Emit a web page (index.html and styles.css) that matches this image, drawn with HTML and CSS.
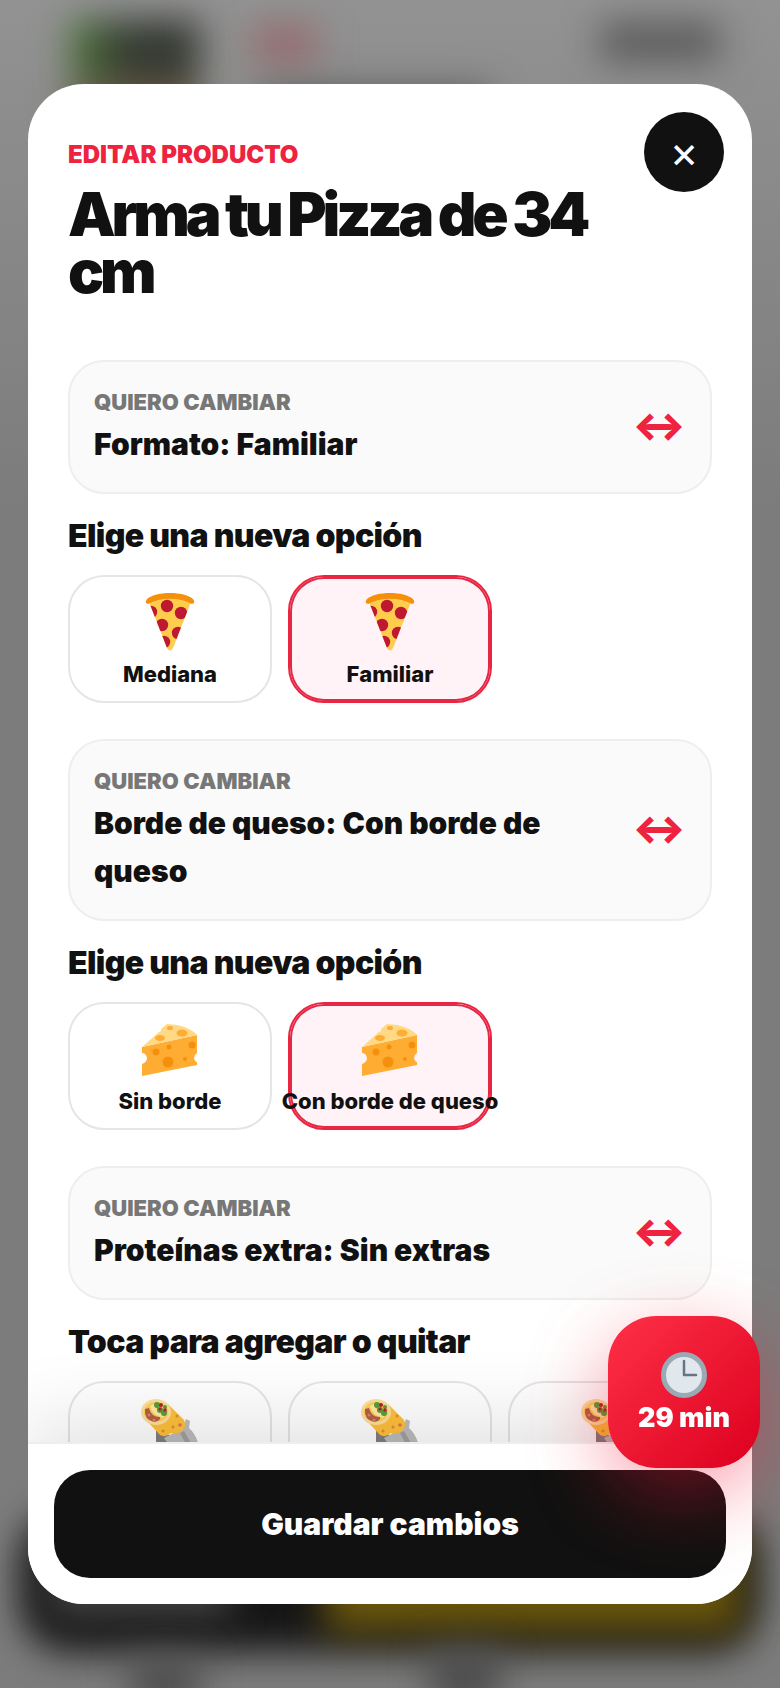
FILE: index.html
```html
<!DOCTYPE html>
<html lang="es"><head><meta charset="utf-8"><meta name="viewport" content="width=device-width, initial-scale=1"><title>Editar producto</title><link rel="stylesheet" href="styles.css"></head>
<body>
<svg class="sprite" aria-hidden="true">
<symbol id="pizza" viewBox="0 0 60 72">
<clipPath id="slice"><path d="M9 16 Q30 6 51 16 L33 62 Q30 67 27 62Z"/></clipPath>
<path fill="#ffcc4d" d="M9 16 Q30 6 51 16 L33 62 Q30 67 27 62Z"/>
<g fill="#be1931" clip-path="url(#slice)"><circle cx="27" cy="20" r="6.2"/><circle cx="41" cy="27" r="6.2"/><circle cx="11" cy="26" r="6.2"/><circle cx="22" cy="39" r="6.2"/><circle cx="38" cy="47" r="6.2"/><circle cx="24" cy="56" r="6.2"/></g>
<path fill="#f4900c" d="M7 13 C16 5 44 5 53 13 Q56 17 52 18 C40 11 20 11 8 18 Q4 17 7 13Z"/>
</symbol>
<symbol id="cheese" viewBox="0 0 68 64">
<path fill="#ffac33" d="M6 30 L61 18 V36 Q58 38 58 41 Q59 45 61 45 V48 L6 59 V47 Q11 45 11 41 Q10 36 6 36Z"/>
<path fill="#ffd983" d="M6 30 L23 15 Q26 14 25 12 L31 7 Q52 8 61 18Z"/>
<g fill="#ffac33"><ellipse cx="24" cy="21" rx="5" ry="3"/><ellipse cx="46" cy="16" rx="5.500" ry="3.500"/><ellipse cx="34" cy="11" rx="3" ry="2"/></g>
<g fill="#f4900c"><circle cx="20" cy="35" r="3.500"/><circle cx="33" cy="30" r="2.500"/><circle cx="32" cy="45" r="5.500"/><circle cx="56" cy="28" r="3.500"/><circle cx="49" cy="42" r="2"/></g>
</symbol>
<symbol id="burrito" viewBox="0 0 68 72">
<path fill="#808080" d="M20 38V64H44L36 44Z"/><path fill="#bdbdbd" d="M28 46 L47 36 L50 27 L54 29 L53 36 Q62 44 64 60 H38Z"/><path fill="#a0a0a0" d="M44 41 L48 39 L60 60 H54Z"/>
<path fill="#ffc13b" d="M10 28 L32 12 L48 28 Q51 34 46 39 Q41 43 35 41 Q30 46 24 43Z"/>
<g fill="#e88b2e"><circle cx="41" cy="24" r="1.500"/><circle cx="37" cy="35" r="1.500"/><circle cx="27" cy="39" r="1.500"/></g><circle cx="44" cy="33" r="1.800" fill="#d47c4c"/>
<ellipse cx="20" cy="20" rx="15" ry="13" fill="#ffdf9e"/><ellipse cx="20" cy="20" rx="12" ry="10" fill="#ffd04f"/>
<path fill="#b55f48" d="M9 17 Q8 28 18 30 Q25 29 24 25 Q15 25 13 16Z"/><path fill="#ffe9a8" d="M14 14 Q16 23 27 26 L29 23 Q20 20 18 12Z"/>
<g fill="#5c9e3c"><circle cx="21" cy="13" r="3"/><circle cx="24" cy="18" r="3"/><circle cx="28" cy="21" r="3"/><circle cx="29" cy="15" r="2"/></g><g fill="#b32132"><circle cx="25" cy="13" r="2"/><circle cx="29" cy="18" r="1.800"/><circle cx="24" cy="17" r="1.500"/></g>
<g fill="#d8866a"><circle cx="13" cy="23" r="1.500"/><circle cx="18" cy="28" r="1.500"/></g>
</symbol>
<symbol id="clock" viewBox="0 0 46 46"><circle cx="23" cy="23" r="20.500" fill="#e1e8ed" stroke="#99aab5" stroke-width="5"/><path d="M23 9V23H35" fill="none" stroke="#66757f" stroke-width="2.500" stroke-linecap="round" stroke-linejoin="round"/></symbol>
</svg>
<div class="backdrop" aria-hidden="true"><i class="photo"></i><i class="tag"></i><i class="price"></i><i class="name"></i><i class="bar"></i><i class="bar-left"></i><i class="bar-right"></i><i class="nav-left"></i><i class="nav-mid"></i></div>
<main class="screen">
<section class="modal" role="dialog" aria-labelledby="title">
<button class="close" type="button" aria-label="Cerrar">×</button>
<div class="content">
<header class="head"><p class="kicker">EDITAR PRODUCTO</p><h1 class="title" id="title">Arma tu Pizza de 34 cm</h1></header>
<section class="group">
<div class="current"><div><p class="hint">QUIERO CAMBIAR</p><p class="value">Formato: Familiar</p></div><span class="swap">↔</span></div>
<h2 class="subtitle">Elige una nueva opción</h2>
<div class="options"><button class="option" type="button"><svg class="icon"><use href="#pizza"/></svg><span>Mediana</span></button><button class="option selected" type="button"><svg class="icon"><use href="#pizza"/></svg><span>Familiar</span></button></div>
</section>
<section class="group">
<div class="current"><div><p class="hint">QUIERO CAMBIAR</p><p class="value">Borde de queso: Con borde de queso</p></div><span class="swap">↔</span></div>
<h2 class="subtitle">Elige una nueva opción</h2>
<div class="options"><button class="option" type="button"><svg class="icon"><use href="#cheese"/></svg><span>Sin borde</span></button><button class="option selected" type="button"><svg class="icon"><use href="#cheese"/></svg><span>Con borde de queso</span></button></div>
</section>
<section class="group">
<div class="current"><div><p class="hint">QUIERO CAMBIAR</p><p class="value">Proteínas extra: Sin extras</p></div><span class="swap">↔</span></div>
<h2 class="subtitle">Toca para agregar o quitar</h2>
<div class="options"><button class="option" type="button" aria-label="Extra 1"><svg class="icon"><use href="#burrito"/></svg></button><button class="option" type="button" aria-label="Extra 2"><svg class="icon"><use href="#burrito"/></svg></button><button class="option" type="button" aria-label="Extra 3"><svg class="icon"><use href="#burrito"/></svg></button></div>
</section>
</div>
<footer class="footer"><button class="save" type="button">Guardar cambios</button></footer>
</section>
</main>
<button class="timer" type="button"><svg class="clock"><use href="#clock"/></svg><span>29 min</span></button>
</body></html>
```
FILE: styles.css
```css
*{box-sizing:border-box}
body{margin:0;background:#8a8888;color:#111;font-family:Inter,"Liberation Sans",sans-serif;overflow:hidden}
p,h1,h2{margin:0}
button{font:inherit;color:inherit;border:0;padding:0;cursor:pointer}
.sprite{position:absolute;width:0;height:0}
.backdrop{position:fixed;inset:0;overflow:hidden;background:linear-gradient(#929292,#7c7c7c 30%,#7c7c7c)}
.backdrop i{position:absolute;filter:blur(18px)}
.photo{left:70px;top:20px;width:130px;height:110px;background:linear-gradient(#0000 40%,#6b5d48 75%),linear-gradient(90deg,#4e7a3a,#333831 45%)}
.tag{left:254px;top:26px;width:62px;height:36px;background:#96686c}
.price{left:600px;top:22px;width:120px;height:40px;background:#5c5c5c}
.name{left:260px;top:90px;width:230px;height:30px;background:#555}
.bar{left:20px;right:20px;bottom:36px;height:140px;border-radius:50px;background:#161616}
.bar-left{left:50px;bottom:72px;width:180px;height:70px;background:#444}
.bar-right{left:325px;right:40px;bottom:56px;height:100px;background:#6a560c}
.nav-left{left:130px;bottom:-20px;width:70px;height:50px;background:#4c4c4c}
.nav-mid{left:430px;bottom:-20px;width:70px;height:60px;background:#4c4c4c}
.screen{position:relative;height:100vh;padding:0 28px;display:flex;align-items:center}
.modal{position:relative;display:flex;flex-direction:column;width:100%;height:90vh;border-radius:56px;background:#fff;overflow:hidden}
.close{position:absolute;top:28px;right:28px;width:80px;height:80px;border-radius:50%;background:#111;color:#fff;font-size:44px;line-height:80px}
.content{flex:1;min-height:0;overflow:hidden;padding:51px 40px 0}
.head{padding-right:112px;margin-bottom:60px}
.kicker{color:#ed2340;font-size:24px;line-height:40px;font-weight:900}
.title{margin-top:11px;font-size:60px;line-height:57px;font-weight:900;letter-spacing:-.07em}
.group{margin-bottom:36px}
.current{display:flex;align-items:center;justify-content:space-between;gap:24px;padding:22px 24px 24px;border:2px solid #eee;border-radius:36px;background:#fafafa}
.hint{color:#777;font-size:22px;line-height:36px;font-weight:900}
.value{font-size:30px;line-height:48px;font-weight:900}
.swap{color:#ed2340;font-size:40px;font-weight:900;line-height:48px}
.subtitle{margin:16px 0 13px;font-size:32px;line-height:52px;font-weight:900;letter-spacing:-.02em}
.options{display:grid;grid-template-columns:repeat(3,minmax(0,1fr));gap:16px}
.option{display:flex;flex-direction:column;align-items:center;height:128px;padding-top:9px;border:2px solid #e5e5e5;border-radius:36px;background:#fff;font-size:22px;line-height:32px;font-weight:800;white-space:nowrap}
.selected{border-color:#ed2340;background:#fff3f7;box-shadow:inset 0 0 0 2px #e02a48}
.icon{flex:none;width:68px;height:72px}
.footer{position:relative;padding:26px;border-top:2px solid #eee;background:#fff;box-shadow:0 -20px 80px rgba(0,0,0,.12)}
.save{display:block;width:100%;height:108px;border-radius:36px;background:#111;color:#fff;font-size:30px;font-weight:900}
.timer{position:fixed;right:20px;bottom:220px;display:flex;flex-direction:column;align-items:center;justify-content:center;width:152px;height:152px;padding-top:6px;border-radius:48px;background:linear-gradient(135deg,#ff3048,#dc001e);box-shadow:0 24px 80px rgba(240,20,50,.42);color:#fff;font-size:27px;line-height:40px;font-weight:900}
.clock{width:46px;height:46px}
```
